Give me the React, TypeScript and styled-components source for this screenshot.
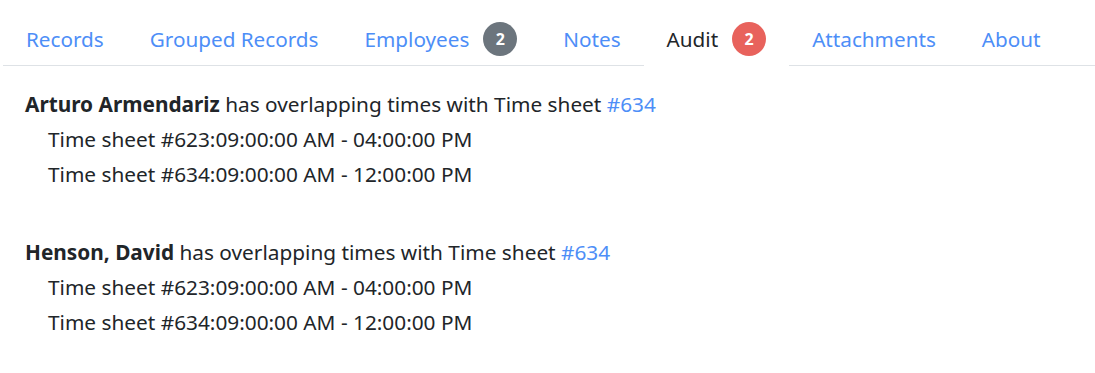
import React from "react";
import styled, { createGlobalStyle } from "styled-components";

const Global = createGlobalStyle`
  html, body { margin: 0; padding: 0; background: #fff; }
  body { font-family: "Noto Sans", "Open Sans", sans-serif; color: #212529; }
`;

const Page = styled.div`
  padding: 0 0 0 3px;
`;

const Tabs = styled.ul`
  display: flex;
  list-style: none;
  margin: 0;
  padding: 0;
  height: 66px;
  box-sizing: border-box;
  border-bottom: 1px solid #dee2e6;
`;

const Tab = styled.li<{ $active?: boolean }>`
  display: flex;
  align-items: center;
  gap: 14px;
  padding: 12px 23px 0;
  height: 66px;
  box-sizing: border-box;
  margin-bottom: -1px;
  font-size: 20.7px;
  color: ${(p) => (p.$active ? "#212529" : "#4d8ef7")};
  background: ${(p) => (p.$active ? "#fff" : "transparent")};
`;

const Badge = styled.span<{ $tone: "gray" | "red" }>`
  display: inline-flex;
  align-items: center;
  justify-content: center;
  width: 34px;
  height: 34px;
  border-radius: 50%;
  font-size: 16px;
  font-weight: 700;
  color: #fff;
  background: ${(p) => (p.$tone === "red" ? "#e8625c" : "#6c757d")};
`;

const Content = styled.div`
  padding: 21px 0 0 22px;
`;

const Entry = styled.div`
  margin-bottom: 43px;
`;

const Line = styled.div<{ $indent?: boolean }>`
  font-size: 20.8px;
  line-height: 35px;
  padding-left: ${(p) => (p.$indent ? "23px" : "0")};
`;

const Name = styled.strong`
  font-weight: 700;
`;

const Link = styled.a`
  color: #4d8ef7;
  text-decoration: none;
`;

const tabs: { label: string; badge?: { n: number; tone: "gray" | "red" }; active?: boolean }[] = [
  { label: "Records" },
  { label: "Grouped Records" },
  { label: "Employees", badge: { n: 2, tone: "gray" } },
  { label: "Notes" },
  { label: "Audit", badge: { n: 2, tone: "red" }, active: true },
  { label: "Attachments" },
  { label: "About" },
];

const entries = [
  { name: "Arturo Armendariz" },
  { name: "Henson, David" },
];

export default function App() {
  return (
    <Page>
      <Global />
      <Tabs>
        {tabs.map((t) => (
          <Tab key={t.label} $active={t.active}>
            {t.label}
            {t.badge && <Badge $tone={t.badge.tone}>{t.badge.n}</Badge>}
          </Tab>
        ))}
      </Tabs>
      <Content>
        {entries.map((e) => (
          <Entry key={e.name}>
            <Line>
              <Name>{e.name}</Name> has overlapping times with Time sheet <Link href="#">#634</Link>
            </Line>
            <Line $indent>Time sheet #623:09:00:00 AM - 04:00:00 PM</Line>
            <Line $indent>Time sheet #634:09:00:00 AM - 12:00:00 PM</Line>
          </Entry>
        ))}
      </Content>
    </Page>
  );
}
